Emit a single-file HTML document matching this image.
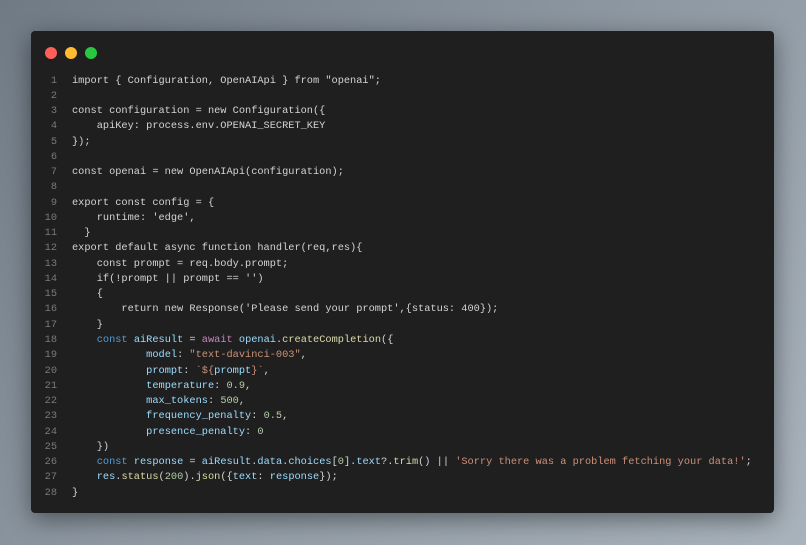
<!DOCTYPE html>
<html><head><style>
body{margin:0;width:806px;height:545px;background:linear-gradient(135deg,#6f7a85 0%,#8f99a3 50%,#a9b3bc 100%);position:relative;overflow:hidden}
.win{position:absolute;left:31px;top:31px;width:743px;height:482px;background:#1f1f1f;border-radius:4px;box-shadow:0 6px 24px rgba(0,0,0,.45)}
.d{position:absolute;top:16px;width:12px;height:12px;border-radius:50%}
pre{position:absolute;left:0;top:42.5px;margin:0;font-family:"Liberation Mono",monospace;font-size:10.3px;line-height:15.26px;color:#d4d4d4}
.n{display:inline-block;width:26px;text-align:right;color:#7a7a7a;margin-right:15px}
.k{color:#569cd6}.v{color:#9cdcfe}.p{color:#c586c0}.f{color:#dcdcaa}.s{color:#ce9178}.m{color:#b5cea8}
</style></head><body>
<div class="win">
<div class="d" style="left:14px;background:#fe5f57"></div>
<div class="d" style="left:34px;background:#febc2e"></div>
<div class="d" style="left:54px;background:#28c840"></div>
<pre><span class="n">1</span>import { Configuration, OpenAIApi } from "openai";
<span class="n">2</span>
<span class="n">3</span>const configuration = new Configuration({
<span class="n">4</span>    apiKey: process.env.OPENAI_SECRET_KEY
<span class="n">5</span>});
<span class="n">6</span>
<span class="n">7</span>const openai = new OpenAIApi(configuration);
<span class="n">8</span>
<span class="n">9</span>export const config = {
<span class="n">10</span>    runtime: 'edge',
<span class="n">11</span>  }
<span class="n">12</span>export default async function handler(req,res){
<span class="n">13</span>    const prompt = req.body.prompt;
<span class="n">14</span>    if(!prompt || prompt == '')
<span class="n">15</span>    {
<span class="n">16</span>        return new Response('Please send your prompt',{status: 400});
<span class="n">17</span>    }
<span class="n">18</span>    <span class="k">const</span> <span class="v">aiResult</span> = <span class="p">await</span> <span class="v">openai</span>.<span class="f">createCompletion</span>({
<span class="n">19</span>            <span class="v">model</span>: <span class="s">"text-davinci-003"</span>,
<span class="n">20</span>            <span class="v">prompt</span>: <span class="s">`${</span><span class="v">prompt</span><span class="s">}`</span>,
<span class="n">21</span>            <span class="v">temperature</span>: <span class="m">0.9</span>,
<span class="n">22</span>            <span class="v">max_tokens</span>: <span class="m">500</span>,
<span class="n">23</span>            <span class="v">frequency_penalty</span>: <span class="m">0.5</span>,
<span class="n">24</span>            <span class="v">presence_penalty</span>: <span class="m">0</span>
<span class="n">25</span>    })
<span class="n">26</span>    <span class="k">const</span> <span class="v">response</span> = <span class="v">aiResult</span>.<span class="v">data</span>.<span class="v">choices</span>[<span class="m">0</span>].<span class="v">text</span>?.<span class="f">trim</span>() || <span class="s">'Sorry there was a problem fetching your data!'</span>;
<span class="n">27</span>    <span class="v">res</span>.<span class="f">status</span>(<span class="m">200</span>).<span class="f">json</span>({<span class="v">text</span>: <span class="v">response</span>});
<span class="n">28</span>}</pre>
</div>
</body></html>
